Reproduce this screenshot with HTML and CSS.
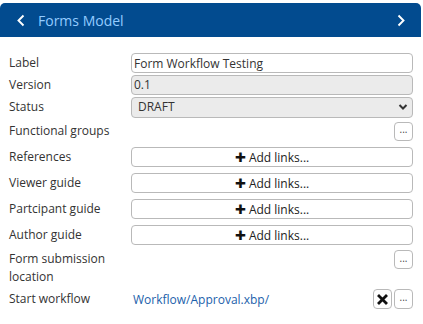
FILE: index.html
```html
<!DOCTYPE html>
<html>
<head>
<meta charset="utf-8">
<link rel="stylesheet" href="styles.css">
</head>
<body>
<div class="panel">
  <div class="header">
    <span class="chev">
      <svg width="10" height="13" viewBox="0 0 10 13"><path d="M7.5 1.5 L2.5 6.5 L7.5 11.5" fill="none" stroke="#fff" stroke-width="1.9"/></svg>
    </span>
    <span class="title">Forms Model</span>
    <span class="chev right">
      <svg width="10" height="13" viewBox="0 0 10 13"><path d="M2.5 1.5 L7.5 6.5 L2.5 11.5" fill="none" stroke="#fff" stroke-width="1.9"/></svg>
    </span>
  </div>
  <div class="form">
    <div class="row r-short">
      <div class="lbl">Label</div>
      <div class="field"><input class="inp" type="text" value="Form Workflow Testing"></div>
    </div>
    <div class="row r-short">
      <div class="lbl">Version</div>
      <div class="field"><div class="inp ro">0.1</div></div>
    </div>
    <div class="row r-short">
      <div class="lbl">Status</div>
      <div class="field"><div class="inp ro sel"><span>DRAFT</span>
        <svg width="10" height="8" viewBox="0 0 10 8"><path d="M1.5 2 L5 5.5 L8.5 2" fill="none" stroke="#333" stroke-width="2"/></svg></div></div>
    </div>
    <div class="row r-tall">
      <div class="lbl">Functional groups</div>
      <div class="field end"><button class="dots">...</button></div>
    </div>
    <div class="row r-tall">
      <div class="lbl">References</div>
      <div class="field"><button class="add"><span class="plus">&#10010;</span> Add links...</button></div>
    </div>
    <div class="row r-tall">
      <div class="lbl">Viewer guide</div>
      <div class="field"><button class="add"><span class="plus">&#10010;</span> Add links...</button></div>
    </div>
    <div class="row r-tall">
      <div class="lbl">Partcipant guide</div>
      <div class="field"><button class="add"><span class="plus">&#10010;</span> Add links...</button></div>
    </div>
    <div class="row r-tall">
      <div class="lbl">Author guide</div>
      <div class="field"><button class="add"><span class="plus">&#10010;</span> Add links...</button></div>
    </div>
    <div class="row r-two">
      <div class="lbl">Form submission location</div>
      <div class="field end top"><button class="dots">...</button></div>
    </div>
    <div class="row r-tall">
      <div class="lbl">Start workflow</div>
      <div class="field wf">
        <a class="link" href="#">Workflow/Approval.xbp/</a>
        <div class="btns">
          <button class="xbtn"><svg width="11" height="11" viewBox="0 0 11 11"><path d="M2 2 L9 9 M9 2 L2 9" stroke="#111" stroke-width="2.8" stroke-linecap="square"/></svg></button>
          <button class="dots">...</button>
        </div>
      </div>
    </div>
  </div>
</div>
</body>
</html>
```

FILE: styles.css
```css
html, body {
  margin: 0;
  padding: 0;
  background: #fff;
}
body {
  font-family: "Open Sans", "Noto Sans", sans-serif;
  font-size: 12px;
  color: #333;
}
.panel {
  width: 421px;
  padding-top: 3px;
}
.header {
  height: 34px;
  background: #024b8f;
  border-radius: 5px 5px 0 0;
  display: flex;
  align-items: center;
  padding: 0 14px 0 15px;
}
.chev {
  display: flex;
  width: 12px;
  justify-content: center;
}
.chev.right {
  margin-left: auto;
}
.title {
  margin-left: 11px;
  color: #94ccff;
  font-size: 14px;
}
.form {
  padding: 15px 8px 0 9px;
  display: flex;
  flex-direction: column;
}
.row {
  display: flex;
  align-items: center;
}
.r-short {
  height: 22px;
}
.r-tall {
  height: 26px;
}
.r-two {
  height: 38px;
  align-items: flex-start;
  padding-top: 2px;
  box-sizing: border-box;
}
.lbl {
  width: 122px;
  flex: none;
  line-height: 18px;
}
.r-two .lbl {
  width: 100px;
}
.field {
  flex: 1;
  display: flex;
  align-items: center;
}
.field.end {
  justify-content: flex-end;
}
.r-two .field {
  margin-left: 22px;
}
.inp {
  box-sizing: border-box;
  width: 100%;
  height: 20px;
  border: 1px solid #b9b9b9;
  border-radius: 4px;
  font-family: "Open Sans", "Noto Sans", sans-serif;
  font-size: 12px;
  color: #333;
  padding: 0 2px;
  line-height: 18px;
  background: #fff;
  outline: none;
  margin: 0;
}
.inp.ro {
  background: #ebebeb;
}
.inp.sel {
  display: flex;
  align-items: center;
  justify-content: space-between;
  padding: 0 4px 0 6px;
  height: 21px;
}
.dots {
  box-sizing: border-box;
  width: 19px;
  height: 19px;
  border: 1px solid #b9b9b9;
  border-radius: 4px;
  background: #fff;
  font-family: "Open Sans", sans-serif;
  font-size: 10px;
  color: #444;
  padding: 0 0 4px;
  line-height: 10px;
  margin: 0;
}
.add {
  box-sizing: border-box;
  width: 100%;
  height: 20px;
  border: 1px solid #b9b9b9;
  border-radius: 4px;
  background: #fff;
  font-family: "Open Sans", sans-serif;
  font-size: 12px;
  color: #222;
  padding: 0;
  margin: 0;
  line-height: 18px;
}
.plus {
  font-size: 13px;
  color: #111;
}
.wf {
  justify-content: space-between;
}
.link {
  color: #1c5fab;
  text-decoration: none;
  margin-left: 2px;
}
.btns {
  display: flex;
  gap: 2px;
}
.xbtn {
  box-sizing: border-box;
  width: 19px;
  height: 20px;
  border: 1px solid #b9b9b9;
  border-radius: 4px;
  background: #fff;
  padding: 0;
  margin: 0;
  display: flex;
  align-items: center;
  justify-content: center;
}
.btns .dots {
  height: 20px;
}
```
